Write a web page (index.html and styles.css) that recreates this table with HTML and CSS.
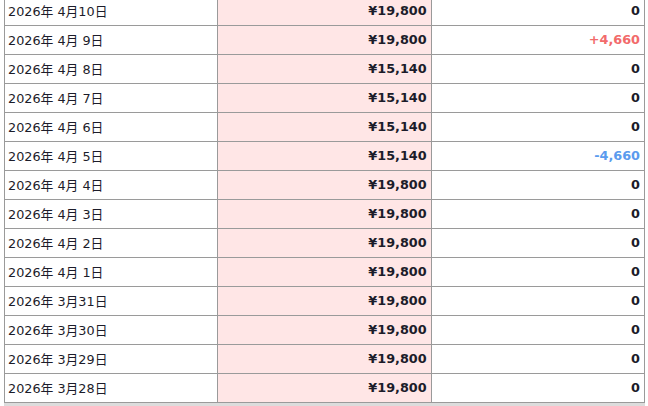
FILE: index.html
```html
<!DOCTYPE html>
<html lang="ja">
<head>
<meta charset="utf-8">
<link rel="stylesheet" href="styles.css">
</head>
<body>
<div class="wrap">
<table class="history">
<tbody>
<tr><td class="date">2026年 4月10日</td><td class="price">¥19,800</td><td class="diff">0</td></tr>
<tr><td class="date">2026年 4月 9日</td><td class="price">¥19,800</td><td class="diff up">+4,660</td></tr>
<tr><td class="date">2026年 4月 8日</td><td class="price">¥15,140</td><td class="diff">0</td></tr>
<tr><td class="date">2026年 4月 7日</td><td class="price">¥15,140</td><td class="diff">0</td></tr>
<tr><td class="date">2026年 4月 6日</td><td class="price">¥15,140</td><td class="diff">0</td></tr>
<tr><td class="date">2026年 4月 5日</td><td class="price">¥15,140</td><td class="diff down">-4,660</td></tr>
<tr><td class="date">2026年 4月 4日</td><td class="price">¥19,800</td><td class="diff">0</td></tr>
<tr><td class="date">2026年 4月 3日</td><td class="price">¥19,800</td><td class="diff">0</td></tr>
<tr><td class="date">2026年 4月 2日</td><td class="price">¥19,800</td><td class="diff">0</td></tr>
<tr><td class="date">2026年 4月 1日</td><td class="price">¥19,800</td><td class="diff">0</td></tr>
<tr><td class="date">2026年 3月31日</td><td class="price">¥19,800</td><td class="diff">0</td></tr>
<tr><td class="date">2026年 3月30日</td><td class="price">¥19,800</td><td class="diff">0</td></tr>
<tr><td class="date">2026年 3月29日</td><td class="price">¥19,800</td><td class="diff">0</td></tr>
<tr><td class="date">2026年 3月28日</td><td class="price">¥19,800</td><td class="diff">0</td></tr>
</tbody>
</table>
<div class="footer-line"></div>
</div>
</body>
</html>
```
FILE: styles.css
```css
html, body {
  margin: 0;
  padding: 0;
  background: #ffffff;
  overflow: hidden;
}
body {
  font-family: "DejaVu Sans", "Noto Sans CJK JP", sans-serif;
  font-size: 12.8px;
  color: #1c1c2a;
}
.wrap {
  margin: -4px 3px 0 4px;
}
.history {
  width: 641px;
  border-collapse: collapse;
  table-layout: fixed;
}
.history td {
  border: 1px solid #9a9a9a;
  height: 29px;
  padding: 0 4px 2px 3px;
  white-space: pre;
  vertical-align: middle;
  box-sizing: border-box;
}
.date {
  text-align: left;
}
.price {
  background: #ffe6e6;
  text-align: right;
  font-weight: bold;
}
.diff {
  text-align: right;
  font-weight: bold;
}
.diff.up { color: #f26b6b; }
.diff.down { color: #5b9bee; }
.footer-line {
  height: 3px;
  background: #dcdcdc;
}
```
